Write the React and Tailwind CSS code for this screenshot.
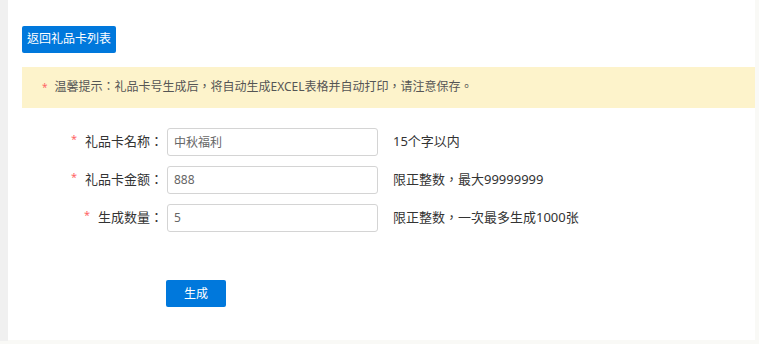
import React from "react";

const font = { fontFamily: '"Microsoft YaHei", "Noto Sans", "Noto Sans CJK TC", "Liberation Sans", sans-serif' };

function Row({ label, value, hint }) {
  return (
    <div className="flex items-center h-[28px]">
      <div className="w-[159px] flex justify-end items-center pr-[4px] text-[13px] text-[#333]">
        <span className="text-[#f66] text-[11px] mr-[8px] relative top-[-2px]">*</span>
        <span>{label}：</span>
      </div>
      <input
        defaultValue={value}
        className="w-[211px] h-[28px] border border-[#d4d4d4] rounded-[3px] px-[6px] text-[12px] text-[#666] outline-none"
      />
      <span className="ml-[15px] text-[13px] text-[#333]">{hint}</span>
    </div>
  );
}

export default function App() {
  return (
    <div className="flex w-[759px] h-[344px] bg-[#f9f9f6]" style={font}>
      <div className="w-[8px] h-[341px] bg-[#f0f0f0]" />
      <div className="w-[747px] h-[340px] bg-white pl-[14px] pt-[25px]">
        <button className="h-[27px] px-[5px] bg-[#0078dc] rounded-[2px] text-white text-[12px]">
          返回礼品卡列表
        </button>
        <div className="mt-[14px] h-[41px] bg-[#fdf3cb] flex items-center pl-[20px] text-[12px] text-[#555]">
          <span className="text-[#f66] text-[10px] mr-[7px]">*</span>
          温馨提示：礼品卡号生成后，将自动生成EXCEL表格并自动打印，请注意保存。
        </div>
        <div className="ml-[-14px] mt-[20px] flex flex-col gap-[10px]">
          <Row label="礼品卡名称" value="中秋福利" hint="15个字以内" />
          <Row label="礼品卡金额" value="888" hint="限正整数，最大99999999" />
          <Row label="生成数量" value="5" hint="限正整数，一次最多生成1000张" />
        </div>
        <div className="pl-[144px] mt-[48px]">
          <button className="w-[60px] h-[27px] bg-[#0078dc] rounded-[2px] text-white text-[12px]">
            生成
          </button>
        </div>
      </div>
    </div>
  );
}
